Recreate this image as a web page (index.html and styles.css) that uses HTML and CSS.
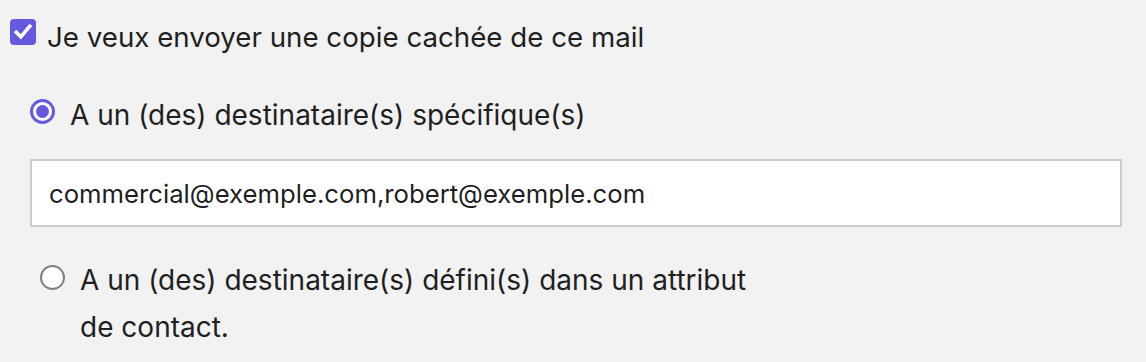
FILE: index.html
```html
<!DOCTYPE html>
<html lang="fr">
<head>
<meta charset="utf-8">
<link rel="stylesheet" href="styles.css">
</head>
<body>
<div class="form">
  <label class="check-row">
    <span class="checkbox">
      <svg viewBox="0 0 26 26" width="26" height="26"><path d="M6.3 13.2 L10.8 17.8 L19.8 7.2" fill="none" stroke="#fff" stroke-width="3.6" stroke-linecap="square"/></svg>
    </span>
    <span class="label">Je veux envoyer une copie cachée de ce mail</span>
  </label>
  <label class="radio-row first">
    <span class="radio checked"><span class="dot"></span></span>
    <span class="label">A un (des) destinataire(s) spécifique(s)</span>
  </label>
  <div class="input">commercial@exemple.com,robert@exemple.com</div>
  <label class="radio-row second">
    <span class="radio"></span>
    <span class="label wrap">A un (des) destinataire(s) défini(s) dans un attribut de contact.</span>
  </label>
</div>
</body>
</html>
```
FILE: styles.css
```css
html, body {
  margin: 0;
  padding: 0;
  background: #f2f2f2;
}
body {
  font-family: Inter, "Noto Sans", sans-serif;
  color: #1f1f1f;
  font-size: 28px;
  width: 1146px;
  height: 362px;
  overflow: hidden;
}
.form {
  display: flex;
  flex-direction: column;
}
.check-row {
  display: flex;
  align-items: flex-start;
  gap: 11px;
  padding-left: 10px;
  margin-top: 19px;
}
.check-row .label {
  font-size: 27.7px;
  line-height: 36px;
}
.checkbox {
  width: 26px;
  height: 26px;
  border-radius: 4px;
  background: #6559e0;
  display: flex;
  flex: none;
}
.radio-row {
  display: flex;
  align-items: flex-start;
}
.radio-row.first {
  margin-top: 44px;
  padding-left: 30px;
  gap: 15px;
}
.radio-row.first .label {
  line-height: 32px;
}
.radio-row.second {
  margin-top: 30px;
  padding-left: 40px;
  gap: 15px;
}
.radio-row.second .radio {
  margin-top: 8px;
}
.radio {
  width: 25px;
  height: 25px;
  box-sizing: border-box;
  border-radius: 50%;
  border: 2px solid #808080;
  background: #fff;
  display: flex;
  align-items: center;
  justify-content: center;
  flex: none;
}
.radio.checked {
  border: 3px solid #6559e0;
}
.radio .dot {
  width: 13px;
  height: 13px;
  border-radius: 50%;
  background: #6559e0;
}
.wrap {
  max-width: 680px;
  line-height: 47px;
}
.input {
  margin-top: 28px;
  margin-left: 30px;
  width: 1092px;
  height: 68px;
  box-sizing: border-box;
  border: 2px solid #cccccc;
  background: #fff;
  padding-left: 17px;
  display: flex;
  align-items: center;
  font-size: 25.7px;
}
```
